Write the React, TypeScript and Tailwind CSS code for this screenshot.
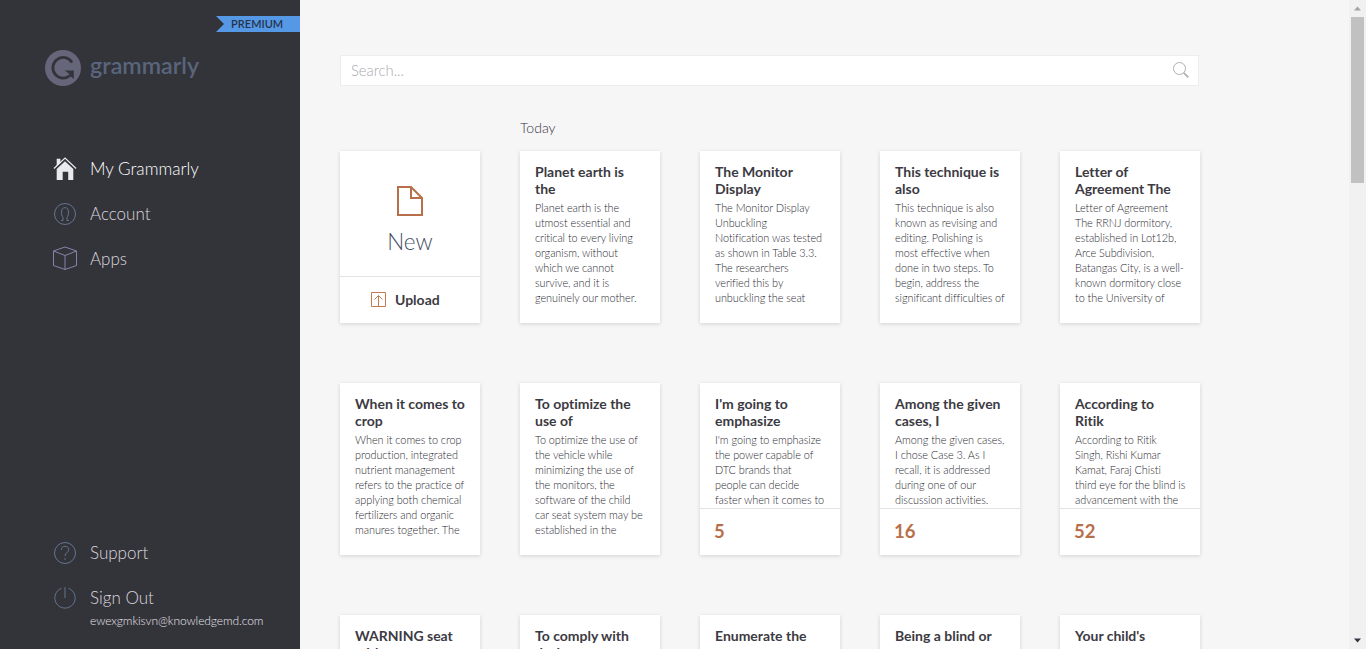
import type { ReactNode } from "react";

interface Doc {
  title: string[];
  body: string[];
  alerts?: number;
}

const DOCS: Doc[] = [
  {
    title: ["Planet earth is", "the"],
    body: [
      "Planet earth is the",
      "utmost essential and",
      "critical to every living",
      "organism, without",
      "which we cannot",
      "survive, and it is",
      "genuinely our mother.",
    ],
  },
  {
    title: ["The Monitor", "Display"],
    body: [
      "The Monitor Display",
      "Unbuckling",
      "Notification was tested",
      "as shown in Table 3.3.",
      "The researchers",
      "verified this by",
      "unbuckling the seat",
    ],
  },
  {
    title: ["This technique is", "also"],
    body: [
      "This technique is also",
      "known as revising and",
      "editing. Polishing is",
      "most effective when",
      "done in two steps. To",
      "begin, address the",
      "significant difficulties of",
    ],
  },
  {
    title: ["Letter of", "Agreement The"],
    body: [
      "Letter of Agreement",
      "The RRNJ dormitory,",
      "established in Lot12b,",
      "Arce Subdivision,",
      "Batangas City, is a well-",
      "known dormitory close",
      "to the University of",
    ],
  },
  {
    title: ["When it comes to", "crop"],
    body: [
      "When it comes to crop",
      "production, integrated",
      "nutrient management",
      "refers to the practice of",
      "applying both chemical",
      "fertilizers and organic",
      "manures together. The",
    ],
  },
  {
    title: ["To optimize the", "use of"],
    body: [
      "To optimize the use of",
      "the vehicle while",
      "minimizing the use of",
      "the monitors, the",
      "software of the child",
      "car seat system may be",
      "established in the",
    ],
  },
  {
    title: ["I'm going to", "emphasize"],
    body: [
      "I'm going to emphasize",
      "the power capable of",
      "DTC brands that",
      "people can decide",
      "faster when it comes to",
    ],
    alerts: 5,
  },
  {
    title: ["Among the given", "cases, I"],
    body: [
      "Among the given cases,",
      "I chose Case 3. As I",
      "recall, it is addressed",
      "during one of our",
      "discussion activities.",
    ],
    alerts: 16,
  },
  {
    title: ["According to", "Ritik"],
    body: [
      "According to Ritik",
      "Singh, Rishi Kumar",
      "Kamat, Faraj Chisti",
      "third eye for the blind is",
      "advancement with the",
    ],
    alerts: 52,
  },
  { title: ["WARNING seat", "with"], body: [] },
  { title: ["To comply with", "design"], body: [] },
  { title: ["Enumerate the"], body: [] },
  { title: ["Being a blind or"], body: [] },
  { title: ["Your child's"], body: [] },
];

function HomeIcon() {
  return (
    <svg width="26" height="26" viewBox="0 0 26 26" fill="#e9eaee">
      <path d="M4 2h4v4.500L4 10z" />
      <path d="M13 4.500 22 13v12h-5.500v-9h-6v9H4V13z" />
      <path d="M1 12.500 13 1.200 25 12.500" fill="none" stroke="#e9eaee" strokeWidth="1.300" />
    </svg>
  );
}

function AccountIcon() {
  return (
    <svg width="24" height="24" viewBox="0 0 24 24" fill="none" stroke="#65748f">
      <circle cx="12" cy="12" r="10.500" />
      <path d="M8 18.500h2v-3C8.800 14 8.500 12 8.500 10c0-2.800 1.200-4.300 3.500-4.300s3.500 1.500 3.500 4.300c0 2-.3 4-1.500 5.500v3h2" />
    </svg>
  );
}

function AppsIcon() {
  return (
    <svg className="shrink-0" width="26" height="25" viewBox="0 0 26 25" fill="none" stroke="#8384aa">
      <path d="M13 1 24.500 5v14.500L13 23.500 1.500 19.500V5zM1.500 5 13 9.500 24.500 5M13 9.500v14" />
    </svg>
  );
}

function SupportIcon() {
  return (
    <svg width="24" height="24" viewBox="0 0 24 24" fill="none" stroke="#65748f">
      <circle cx="12" cy="12" r="10.500" />
      <path d="M8.300 9c0-2.300 1.400-3.700 3.700-3.700S15.700 6.600 15.700 8.700c0 2.700-3.700 3.200-3.700 6.300M12 17v1.800" />
    </svg>
  );
}

function SignOutIcon() {
  return (
    <svg width="24" height="24" viewBox="0 0 24 24" fill="none" stroke="#65748f">
      <path d="M8.500 2.300a10.200 10.200 0 1 0 7 0M12 1v11" />
    </svg>
  );
}

function Logo() {
  return (
    <div className="flex h-9 items-center">
      <svg width="36" height="36" viewBox="0 0 36 36">
        <circle cx="18" cy="18" r="18" fill="#656679" />
        <path
          d="M27 12.500A10.300 10.300 0 1 0 25 25.500"
          fill="none"
          stroke="#33343a"
          strokeWidth="2.800"
        />
        <path d="M19.500 20.500h9.300v8.500l-3.300-2.800-2.200-3.200z" fill="#33343a" />
      </svg>
      <span className="ml-[9px] -mt-1.5 text-[23.3px] font-semibold leading-9 text-[#59657c]">
        grammarly
      </span>
    </div>
  );
}

interface NavItemProps {
  icon: ReactNode;
  label: string;
  active?: boolean;
}

function NavItem({ icon, label, active }: NavItemProps) {
  return (
    <a className="flex h-[45px] items-center">
      <span className="flex w-6 shrink-0 justify-center">{icon}</span>
      <span className={active ? "ml-[13px] text-[17.1px] font-light text-white" : "ml-[13px] text-[17px] font-light text-[#dcd6de]"}>
        {label}
      </span>
    </a>
  );
}

function Sidebar() {
  return (
    <aside className="flex w-[300px] shrink-0 flex-col bg-[#33343a]">
      <div className="flex justify-end pt-4">
        <div className="h-4 w-[84px] bg-[#5599e6] pl-[15px] text-[11px] font-semibold leading-4 tracking-[0.03px] text-[#263349] [clip-path:polygon(0_0,100%_0,100%_100%,0_100%,8px_50%)]">
          PREMIUM
        </div>
      </div>
      <div className="mt-[18px] pl-[45px]">
        <Logo />
      </div>
      <nav className="mt-[60px] pl-[53px]">
        <NavItem icon={<HomeIcon />} label="My Grammarly" active />
        <NavItem icon={<AccountIcon />} label="Account" />
        <NavItem icon={<AppsIcon />} label="Apps" />
      </nav>
      <nav className="mt-auto pb-[19px] pl-[53px]">
        <NavItem icon={<SupportIcon />} label="Support" />
        <NavItem icon={<SignOutIcon />} label="Sign Out" />
        <p className="-mt-2 ml-[37px] text-[12px] font-light leading-[18px] tracking-[-0.09px] text-[#ece6ee]">
          ewexgmkisvn@knowledgemd.com
        </p>
      </nav>
    </aside>
  );
}

function NewCard() {
  return (
    <div className="flex h-[172px] w-[140px] flex-col bg-white shadow-[0_1px_4px_rgba(0,0,0,0.15)]">
      <div className="flex h-[125px] flex-col items-center pt-[35px]">
        <svg width="28" height="31" viewBox="0 0 28 31" fill="none" stroke="#b8704a" strokeWidth="2">
          <path d="M2 1h13l11 11v17H2zM15 1v11h11" />
        </svg>
        <span className="mt-[9px] text-[22.5px] font-light leading-8 text-[#474f66]">New</span>
      </div>
      <div className="flex h-[47px] items-center border-t border-[#e4e4e6] pb-0.5 pl-[31px]">
        <svg width="15" height="15" viewBox="0 0 15 15" fill="none" stroke="#c27a50">
          <path d="M.5.5h14v14H.5zM7.500 14V4M3.500 7.500l4-4 4 4" />
        </svg>
        <span className="ml-[9px] text-[14px] font-bold text-[#3c3a42]">Upload</span>
      </div>
    </div>
  );
}

function DocCard({ doc }: { doc: Doc }) {
  return (
    <div className="flex h-[172px] w-[140px] flex-col overflow-hidden bg-white shadow-[0_1px_4px_rgba(0,0,0,0.15)]">
      <div className="min-h-0 flex-1 overflow-hidden whitespace-nowrap pl-[15px] pt-3">
        <h3 className="text-[14px] font-bold leading-[17px] tracking-[-0.01px] text-[#3c3a42]">
          {doc.title.map((line) => (
            <span key={line} className="block">{line}</span>
          ))}
        </h3>
        <p className="mt-[3px] text-[10.9px] font-light leading-[15px] tracking-[-0.05px] text-[#2c2b33]">
          {doc.body.map((line) => (
            <span key={line} className="block">{line}</span>
          ))}
        </p>
      </div>
      {doc.alerts !== undefined && (
        <div className="h-[47px] shrink-0 border-t border-[#e4e4e6] pl-[14px] text-[18.5px] font-bold leading-[45px] text-[#b8704a]">
          {doc.alerts}
        </div>
      )}
    </div>
  );
}

function Scrollbar() {
  return (
    <div className="flex w-[17px] shrink-0 flex-col items-center bg-[#f1f1f1]">
      <svg width="17" height="17" viewBox="0 0 17 17" fill="#a3a3a3">
        <path d="M5 10.500h7l-3.500-4z" />
      </svg>
      <div className="h-[166px] w-[13px] bg-[#c1c1c1]" />
      <svg className="mt-auto" width="17" height="17" viewBox="0 0 17 17" fill="#333440">
        <path d="M5 6.500h7l-3.500 4z" />
      </svg>
    </div>
  );
}

export default function App() {
  return (
    <div className="flex h-[649px] w-[1366px] overflow-hidden bg-[#f6f6f6] font-['Lato',sans-serif]">
      <Sidebar />
      <main className="min-w-0 flex-1 overflow-hidden pl-10 pt-[55px]">
        <div className="flex h-[31px] w-[859px] items-center justify-between border border-[#ededed] bg-white pl-[10px] pr-[9px]">
          <span className="text-[14.8px] font-light text-[#a9a9ae]">Search...</span>
          <svg className="mb-0.5" width="16" height="16" viewBox="0 0 16 16" fill="none" stroke="#b0b0b0">
            <circle cx="6.500" cy="6.500" r="6" />
            <path d="M10.800 10.800 15.300 15.300" strokeWidth="1.800" />
          </svg>
        </div>
        <h2 className="ml-[180px] mt-8 text-[14px] font-light leading-5 text-[#36343f]">Today</h2>
        <div className="mt-[13px] grid w-[860px] grid-cols-5 gap-x-10 gap-y-[60px]">
          <NewCard />
          {DOCS.map((doc) => (
            <DocCard key={doc.title[0]} doc={doc} />
          ))}
        </div>
      </main>
      <Scrollbar />
    </div>
  );
}
